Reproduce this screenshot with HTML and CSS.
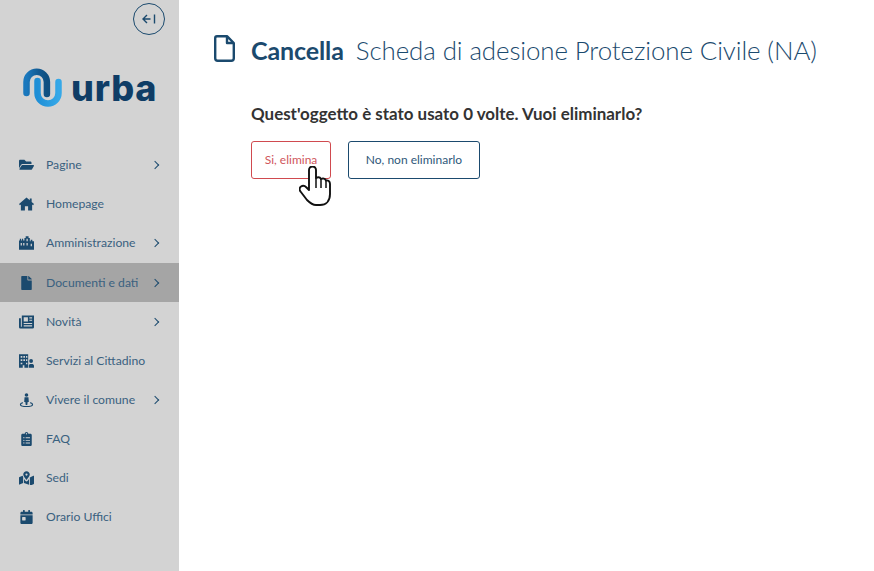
FILE: index.html
```html
<!DOCTYPE html>
<html lang="it">
<head>
<meta charset="utf-8">
<title>Cancella</title>
<link rel="stylesheet" href="styles.css">
</head>
<body>
<div class="app">
  <aside class="sidebar">
    <div class="toggle-row">
      <button class="toggle" aria-label="Chiudi">
        <svg viewBox="0 0 16 12" width="16" height="12"><path d="M6 2 2 6l4 4M2 6h7.500M13.500 1.500v9" fill="none" stroke="#1b4a6e" stroke-width="1.400"/></svg>
      </button>
    </div>
    <div class="logo">
      <svg class="logo-mark" viewBox="0 0 40 40" width="40" height="40">
        <defs>
          <linearGradient id="g1" x1="0" y1="0" x2="1" y2="0"><stop offset="0" stop-color="#1a78bd"/><stop offset=".6" stop-color="#125a92"/><stop offset="1" stop-color="#0f4f80"/></linearGradient>
          <linearGradient id="g2" x1="0" y1="0" x2="1" y2="0"><stop offset="0" stop-color="#1f8fd6"/><stop offset="1" stop-color="#35a8e8"/></linearGradient>
        </defs>
        <path d="M14.500 13v12a10 10 0 0 0 21 0V14" fill="none" stroke="url(#g2)" stroke-width="6.500" stroke-linecap="round"/>
        <path d="M3.500 25V14a10.200 10.200 0 0 1 20.400 0v12" fill="none" stroke="url(#g1)" stroke-width="6.500" stroke-linecap="round"/>
      </svg>
      <span class="logo-text">urba</span>
    </div>
    <nav class="menu">
      <a class="item"><svg class="ico" viewBox="0 0 576 512"><path d="M572.700 292 500.300 416c-9 15.300-25.400 24-41.300 24H40c-18 0-30-20-20.700-36l72.400-124c9-15.300 25.400-24 41.300-24h419c18.500 0 30 20 20.700 36zM152 218h328v-50c0-26.500-21.500-48-48-48H272l-64-64H48C21.500 56 0 77.500 0 104v278l69-118c17-29 49-46 83-46z"/></svg><span class="label">Pagine</span><span class="chev"></span></a>
      <a class="item"><svg class="ico" viewBox="0 0 16 14"><path d="M8 0 0 7l1 1.200L2 7.400V14h4.300V9.500h3.400V14H14V7.400l1 .800L16 7l-2.500-2.200V1h-2v2L8 0z"/></svg><span class="label">Homepage</span></a>
      <a class="item"><svg class="ico" viewBox="0 0 18 16"><path fill-rule="evenodd" d="M0 16V5h1V3h1.500v2h1V3H5v2h1.500V2H8V0h3.500v2H13v4h1V4h2v2h2v10zM2 8v3h1.500V8zm3 0v3h1.500V8zm4-5v3h1.500V3zm0 5v3h1.500V8zm5 1v3h1.500V9z"/></svg><span class="label">Amministrazione</span><span class="chev"></span></a>
      <a class="item active"><svg class="ico" viewBox="0 0 384 512"><path d="M224 136V0H24C10.700 0 0 10.700 0 24v464c0 13.300 10.700 24 24 24h336c13.300 0 24-10.700 24-24V160H248c-13.200 0-24-10.800-24-24zm160-14v6H256V0h6c6.400 0 12.500 2.500 17 7l98 98c4.500 4.500 7 10.600 7 17z"/></svg><span class="label">Documenti e dati</span><span class="chev"></span></a>
      <a class="item"><svg class="ico" viewBox="0 0 16 14"><path fill-rule="evenodd" d="M3 0h13v12.500a1.500 1.500 0 0 1-1.500 1.500H1.500A1.500 1.500 0 0 1 0 12.500V3h2v9h1zM5 2v4.500h4.500V2zm6 0v1.200h3V2zm0 2.500v1.200h3V4.500zM5 8v1.200h9V8zm0 2.500v1.200h9v-1.200z"/></svg><span class="label">Novità</span><span class="chev"></span></a>
      <a class="item"><svg class="ico" viewBox="0 0 18 16"><path fill-rule="evenodd" d="M0 0h11v16H6.500v-3h-2v3H0zM2 2v2h2V2zm3.200 0v2h2V2zM8.400 2v2H10V2zM2 6v2h2V6zm3.200 0v2h2V6zm3.200 0v2H10V6zM2 10v2h2v-2zm6.400 0v2H10v-2z"/><circle cx="14.500" cy="8" r="2.300"/><path d="M11.800 16v-2.500c0-1.300 1-2 2-2h1.700c1.200 0 2.500.700 2.500 2V16z"/></svg><span class="label">Servizi al Cittadino</span></a>
      <a class="item"><svg class="ico" viewBox="0 0 18 18"><circle cx="9" cy="2.500" r="2.300"/><path d="M6.500 5.500h5l.500 6h-1.500l-.5 4h-2l-.5-4H6z"/><path d="M4.500 12C2 12.500.500 13.500.500 15c0 2 4 3 8.500 3s8.500-1 8.500-3c0-1.500-1.500-2.500-4-3v1.300c1.600.4 2.500 1 2.500 1.700 0 1-3 1.800-7 1.800s-7-.8-7-1.800c0-.7 1-1.300 2.500-1.700z"/></svg><span class="label">Vivere il comune</span><span class="chev"></span></a>
      <a class="item"><svg class="ico" viewBox="0 0 384 512"><path fill-rule="evenodd" d="M336 64h-80c0-35.300-28.700-64-64-64s-64 28.700-64 64H48C21.500 64 0 85.500 0 112v352c0 26.500 21.500 48 48 48h288c26.500 0 48-21.500 48-48V112c0-26.500-21.500-48-48-48zM192 40a24 24 0 1 1 0 48 24 24 0 0 1 0-48zM96 424a24 24 0 1 1 0-48 24 24 0 0 1 0 48zm0-96a24 24 0 1 1 0-48 24 24 0 0 1 0 48zm0-96a24 24 0 1 1 0-48 24 24 0 0 1 0 48zm224 176c0 4.400-3.600 8-8 8H168c-4.400 0-8-3.600-8-8v-16c0-4.400 3.600-8 8-8h144c4.400 0 8 3.600 8 8zm0-96c0 4.400-3.600 8-8 8H168c-4.400 0-8-3.600-8-8v-16c0-4.400 3.600-8 8-8h144c4.400 0 8 3.600 8 8zm0-96c0 4.400-3.600 8-8 8H168c-4.400 0-8-3.600-8-8v-16c0-4.400 3.600-8 8-8h144c4.400 0 8 3.600 8 8z"/></svg><span class="label">FAQ</span></a>
      <a class="item"><svg class="ico" viewBox="0 0 576 512"><path d="M288 0c-69.600 0-126 56.400-126 126 0 56.300 82.400 158.800 114 196 6.400 7.500 17.600 7.500 24 0 31.600-37.200 114-139.700 114-196C414 56.400 357.600 0 288 0zm0 168a42 42 0 1 1 0-84 42 42 0 0 1 0 84zM20 216C8 221 0 232 0 245v250c0 11 12 19 22 15l138-63V215c-9-16-16-32-21-47zm268 171c-14 0-27-6-37-17-23-27-47-58-59-78v159l192 64V292c-22 30-46 60-60 78-9 11-22 17-36 17zm266-218-138 63v320l140-56c12-5 20-16 20-29V184c0-11-12-19-22-15z"/></svg><span class="label">Sedi</span></a>
      <a class="item"><svg class="ico" viewBox="0 0 448 512"><path fill-rule="evenodd" d="M0 464c0 26.500 21.500 48 48 48h352c26.500 0 48-21.500 48-48V192H0zm64-192c0-8.800 7.200-16 16-16h96c8.800 0 16 7.200 16 16v96c0 8.800-7.200 16-16 16H80c-8.800 0-16-7.200-16-16zM400 64h-48V16c0-8.800-7.200-16-16-16h-32c-8.800 0-16 7.200-16 16v48H160V16c0-8.800-7.200-16-16-16h-32c-8.800 0-16 7.200-16 16v48H48C21.500 64 0 85.500 0 112v48h448v-48c0-26.500-21.500-48-48-48z"/></svg><span class="label">Orario Uffici</span></a>
    </nav>
  </aside>
  <main class="content">
    <header class="title">
      <svg class="title-ico" viewBox="0 0 21 27" width="21" height="27"><path d="M3 1.200h10l6.800 6.800v15.300a2.500 2.500 0 0 1-2.500 2.500H3.700a2.500 2.500 0 0 1-2.500-2.500V3a1.800 1.800 0 0 1 1.800-1.800zM13 1.200V8h6.800" fill="none" stroke="#1b4a6e" stroke-width="2.400" stroke-linejoin="round"/></svg>
      <h1 class="heading"><strong>Cancella</strong><span>Scheda di adesione Protezione Civile (NA)</span></h1>
    </header>
    <p class="question">Quest'oggetto è stato usato 0 volte. Vuoi eliminarlo?</p>
    <div class="actions">
      <a class="btn btn-danger">Si, elimina</a>
      <a class="btn btn-primary">No, non eliminarlo</a>
      <svg class="cursor" viewBox="0 0 32 40" width="32" height="40"><path d="M10 4a3.500 3.500 0 0 1 7 0v8c2-1 4-.8 5 1 2-1 4-.6 5 1.500 2-.5 4 .8 4 3.500v10c0 7-4 11-10 11h-4c-4 0-6-2-9-5L1.500 25.500c-1.500-1.500-1-4 .5-5 2-1.200 4-.5 5.500 1l2.500 2.500z" fill="#fff" stroke="#111" stroke-width="1.900" stroke-linejoin="round"/><path d="M17 12v10M22 13v9M27 14.500V22" stroke="#111" stroke-width="1.500" fill="none"/></svg>
    </div>
  </main>
</div>
</body>
</html>
```
FILE: styles.css
```css
* { box-sizing: border-box; }
html, body { margin: 0; height: 100%; background: #fff; }
body { font-family: "Lato", "Open Sans", sans-serif; color: #1b4a6e; overflow: hidden; }
.app { display: flex; height: 571px; }
.sidebar { width: 179px; flex: none; background: #d3d3d3; display: flex; flex-direction: column; }
.toggle-row { display: flex; justify-content: flex-end; padding: 3px 14px 0 0; }
.toggle { width: 32px; height: 32px; border: 1px solid #1b4a6e; border-radius: 50%; background: none; padding: 0; display: flex; align-items: center; justify-content: center; }
.logo { display: flex; align-items: flex-start; gap: 8px; padding: 33px 0 0 23px; height: 110.700px; }
.logo-mark { flex: none; }
.logo-text { font-family: "Inter", sans-serif; font-weight: 800; font-size: 36px; line-height: 40px; color: #0f3d66; letter-spacing: .8px; }
.menu { display: flex; flex-direction: column; }
.item { height: 39.100px; display: flex; align-items: center; padding: 0 21px 0 19px; font-size: 12.200px; color: #3a6180; }
.item.active { background: #a5a5a5; }
.ico { width: 15px; height: 14px; fill: #1b4a6e; flex: none; margin-right: 12px; }
.label { flex: 1; padding-bottom: 1px; }
.chev { width: 6px; height: 6px; border: solid #1b4a6e; border-width: 1.500px 1.500px 0 0; transform: rotate(45deg); }
.content { flex: 1; padding: 33px 0 0 35px; }
.title { display: flex; align-items: center; gap: 16px; height: 36px; }
.title-ico { flex: none; margin-bottom: 5px; }
.heading { margin: 0 0 2px; font-size: 25px; font-weight: 400; white-space: nowrap; display: flex; align-items: baseline; gap: 12px; color: #1b4a6e; letter-spacing: -.1px; }
.heading strong { font-weight: 700; }
.heading span { font-weight: 300; font-size: 25.900px; }
.question { margin: 26px 0 0; padding: 0 0 0 37px; font-size: 16.950px; font-weight: 700; color: #333; line-height: 38px; height: 38px; }
.actions { position: relative; display: flex; gap: 17px; padding: 8px 0 0 37px; }
.btn { height: 38px; display: flex; align-items: center; justify-content: center; padding-bottom: 1px; border: 1px solid; border-radius: 3px; font-size: 12px; }
.btn-danger { width: 80px; border-color: #d04a4f; color: #d0565c; }
.btn-primary { width: 132px; border-color: #1b4a6e; color: #2f587a; }
.cursor { position: absolute; left: 85px; top: 33px; }
```
